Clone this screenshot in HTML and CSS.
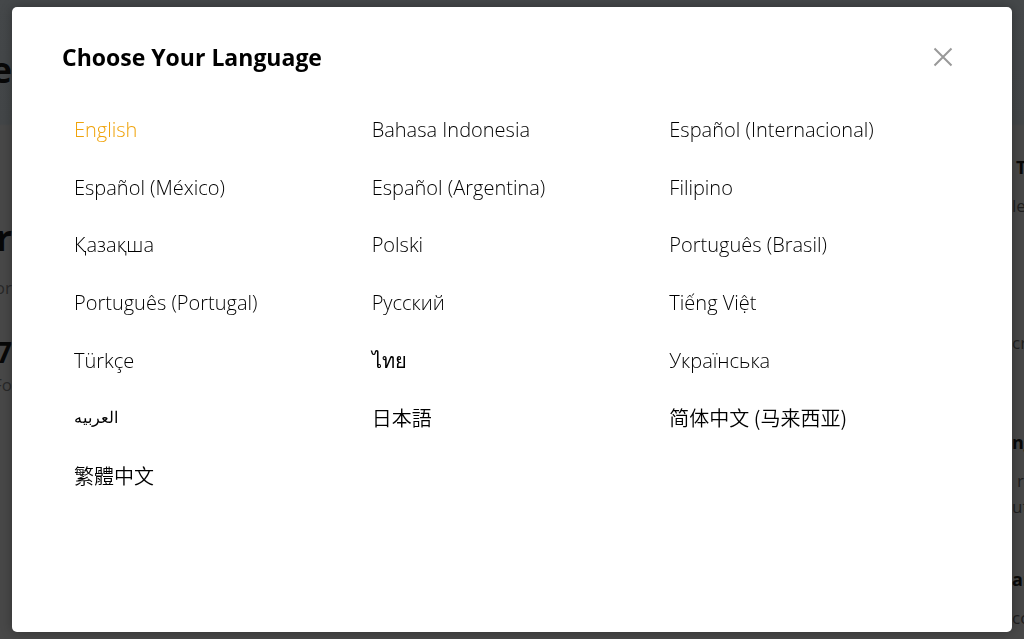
FILE: index.html
```html
<!DOCTYPE html>
<html lang="en">
<head>
<meta charset="utf-8">
<meta name="viewport" content="width=device-width, initial-scale=1">
<title>Choose Your Language</title>
<link rel="stylesheet" href="styles.css">
</head>
<body>
<div class="page" aria-hidden="true">
  <div class="side side-left">
    <p class="hero">e</p>
    <p class="hero second">r</p>
    <p class="note after-hero">or</p>
    <p class="figure">7</p>
    <p class="note">Fo</p>
  </div>
  <div class="side side-right">
    <p class="heading first">T</p>
    <p class="copy">le</p>
    <p class="copy apart">cr</p>
    <p class="heading later">ng</p>
    <p class="copy indent">r</p>
    <p class="copy tight">ute</p>
    <p class="heading last">ar</p>
    <p class="copy">co</p>
  </div>
</div>
<div class="overlay">
  <section class="modal" role="dialog" aria-modal="true" aria-labelledby="title">
    <header class="modal-header">
      <h1 class="title" id="title">Choose Your Language</h1>
      <button class="close" type="button" aria-label="Close">
        <svg class="close-icon" viewBox="0 0 20 20"><path d="M1.5 1.5 18.5 18.5M18.5 1.5 1.5 18.5"/></svg>
      </button>
    </header>
    <nav class="languages">
      <a class="language active" href="#en">English</a>
      <a class="language" href="#id">Bahasa Indonesia</a>
      <a class="language" href="#es">Español (Internacional)</a>
      <a class="language" href="#mx">Español (México)</a>
      <a class="language" href="#ar-es">Español (Argentina)</a>
      <a class="language" href="#fil">Filipino</a>
      <a class="language" href="#kk">Қазақша</a>
      <a class="language" href="#pl">Polski</a>
      <a class="language" href="#br">Português (Brasil)</a>
      <a class="language" href="#pt">Português (Portugal)</a>
      <a class="language" href="#ru">Русский</a>
      <a class="language" href="#vi">Tiếng Việt</a>
      <a class="language" href="#tr">Türkçe</a>
      <a class="language thai" lang="th" href="#th">ไทย</a>
      <a class="language" href="#uk">Українська</a>
      <a class="language arabic" lang="ar" href="#ar">العربيه</a>
      <a class="language cjk" lang="ja" href="#ja">日本語</a>
      <a class="language cjk" lang="zh-Hans" href="#zh-my">简体中文 (马来西亚)</a>
      <a class="language cjk" lang="zh-Hant" href="#zh-tw">繁體中文</a>
    </nav>
  </section>
</div>
</body>
</html>
```
FILE: styles.css
```css
* {
  box-sizing: border-box;
}

body {
  margin: 0;
  font-family: "Open Sans", "Noto Sans", "Noto Sans CJK SC", sans-serif;
  color: #000;
  background: #484848;
}

.page {
  display: flex;
  justify-content: space-between;
  height: 100vh;
  overflow: hidden;
  background: linear-gradient(#45484a 0, #434648 124px, #484848 126px);
}

.side {
  width: 12px;
  white-space: nowrap;
  color: #080808;
}

.side p {
  margin: 0;
}

.side-left {
  display: flex;
  flex-direction: column;
  align-items: flex-end;
  padding-top: 46px;
}

.hero {
  font-size: 36px;
  line-height: 48px;
  font-weight: 700;
}

.side .second {
  margin-top: 120px;
}

.note {
  font-size: 17px;
  line-height: 24px;
  color: #292929;
}

.side .after-hero {
  margin: 14px 0 34px;
}

.figure {
  font-size: 28px;
  line-height: 36px;
  font-weight: 700;
}

.side .figure + .note {
  margin-top: 3px;
}

.side-right {
  padding-top: 154px;
}

.heading {
  font-size: 18px;
  line-height: 26px;
  font-weight: 700;
}

.first {
  padding-left: 4px;
}

.copy {
  font-size: 17px;
  line-height: 26px;
  color: #202020;
}

.side .heading + .copy {
  margin-top: 13px;
}

.side .apart {
  margin-top: 111px;
}

.side .later {
  margin-top: 73px;
}

.indent {
  padding-left: 5px;
}

.side .last {
  margin-top: 46px;
}

.overlay {
  position: fixed;
  inset: 0;
  display: flex;
  padding: 7px 12px;
}

.modal {
  flex: 1;
  display: flex;
  flex-direction: column;
  padding: 30px 57px 127px 50px;
  border-radius: 5px;
  background: #fff;
  box-shadow: 0 0 12px rgba(0, 0, 0, 0.3);
}

.modal-header {
  display: flex;
  align-items: center;
  justify-content: space-between;
  margin-bottom: 24px;
}

.title {
  margin: 0;
  font-size: 23px;
  line-height: 40px;
  font-weight: 700;
}

.close {
  display: flex;
  padding: 2px;
  border: 0;
  background: none;
  cursor: pointer;
}

.close-icon {
  width: 20px;
  height: 20px;
  fill: none;
  stroke: #999;
  stroke-width: 2;
}

.languages {
  flex: 1;
  display: grid;
  grid-template-columns: repeat(3, 1fr);
  grid-auto-rows: 1fr;
  align-items: center;
}

.language {
  padding-left: 12px;
  font-size: 20px;
  line-height: 30px;
  font-weight: 300;
  color: #000;
  text-decoration: none;
}

.active {
  color: #f0a30a;
}

.thai {
  font-weight: 400;
}

.arabic {
  font-family: "DejaVu Sans", sans-serif;
  font-size: 16px;
}

.cjk {
  font-family: "Noto Sans CJK SC", sans-serif;
  font-weight: 350;
}

.cjk:lang(ja) {
  font-family: "Noto Sans CJK JP", sans-serif;
}

.cjk:lang(zh-Hant) {
  font-family: "Noto Sans CJK TC", sans-serif;
}
```
